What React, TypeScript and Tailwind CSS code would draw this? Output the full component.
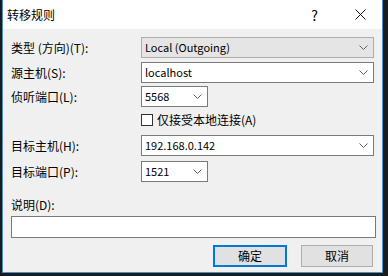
import React from "react";

const font = { fontFamily: '"Noto Sans CJK SC", "Noto Sans", sans-serif' };

function Chevron() {
  return (
    <svg width="9" height="6" viewBox="0 0 9 6" className="shrink-0">
      <polyline points="0.5,0.5 4.5,4.5 8.5,0.5" fill="none" stroke="#606060" strokeWidth="1" />
    </svg>
  );
}

function Combo({ value, width, disabled }: { value: string; width: string; disabled?: boolean }) {
  return (
    <div
      className={`${width} h-[21px] flex items-center justify-between pl-[3px] pr-[5px] border ${
        disabled ? "bg-[#e5e5e5] border-[#adadad]" : "bg-white border-[#7a7a7a]"
      }`}
    >
      <span className="text-[11px] leading-none text-black">{value}</span>
      <Chevron />
    </div>
  );
}

function Row({ label, children, className }: { label: string; children: React.ReactNode; className?: string }) {
  return (
    <div className={`flex items-center ${className ?? ""}`}>
      <div className="w-[130px] text-[12px] leading-none text-black">{label}</div>
      {children}
    </div>
  );
}

export default function App() {
  return (
    <div className="w-[388px] h-[276px] bg-[#1b1b1b] pl-[2px]" style={font}>
      <div className="w-[381px] h-[273px] border-x border-b border-[#4f8ccc] bg-[#f0f0f0] flex flex-col">
        {/* Title bar */}
        <div className="h-[29px] bg-white flex items-center pl-[4px] shrink-0">
          <span className="text-[12px] text-black leading-none">转移规则</span>
          <span className="ml-auto text-[14px] text-black leading-none mr-[37px]">?</span>
          <svg width="11" height="11" viewBox="0 0 11 11" className="mr-[16px]">
            <path d="M0.5 0.5 L10.5 10.5 M10.5 0.5 L0.5 10.5" stroke="#111" strokeWidth="1" />
          </svg>
        </div>

        {/* Body */}
        <div className="pl-[8px] flex flex-col">
          <Row label="类型 (方向)(T):" className="mt-[8px]">
            <Combo value="Local (Outgoing)" width="w-[233px]" disabled />
          </Row>
          <Row label="源主机(S):" className="mt-[4px]">
            <Combo value="localhost" width="w-[233px]" />
          </Row>
          <Row label="侦听端口(L):" className="mt-[3px]">
            <Combo value="5568" width="w-[67px]" />
          </Row>
          <div className="flex items-center mt-[6px] ml-[130px] h-[14px]">
            <div className="w-[12px] h-[12px] border border-[#333] bg-white" />
            <span className="ml-[4px] text-[12px] leading-none text-black">仅接受本地连接(A)</span>
          </div>
          <Row label="目标主机(H):" className="mt-[8px]">
            <Combo value="192.168.0.142" width="w-[233px]" />
          </Row>
          <Row label="目标端口(P):" className="mt-[5px]">
            <Combo value="1521" width="w-[67px]" />
          </Row>
          <div className="mt-[17px] text-[12px] leading-none text-black">说明(D):</div>
          <div className="mt-[5px] w-[365px] h-[22px] bg-white border border-[#7a7a7a]" />
          <div className="mt-[7px] flex pl-[202px]">
            <button className="w-[74px] h-[22px] bg-[#e1e1e1] border-2 border-[#0078d7] text-[12px] text-black leading-none">
              确定
            </button>
            <button className="ml-[14px] w-[72px] h-[22px] bg-[#e1e1e1] border border-[#adadad] text-[12px] text-black leading-none">
              取消
            </button>
          </div>
        </div>
      </div>
    </div>
  );
}
